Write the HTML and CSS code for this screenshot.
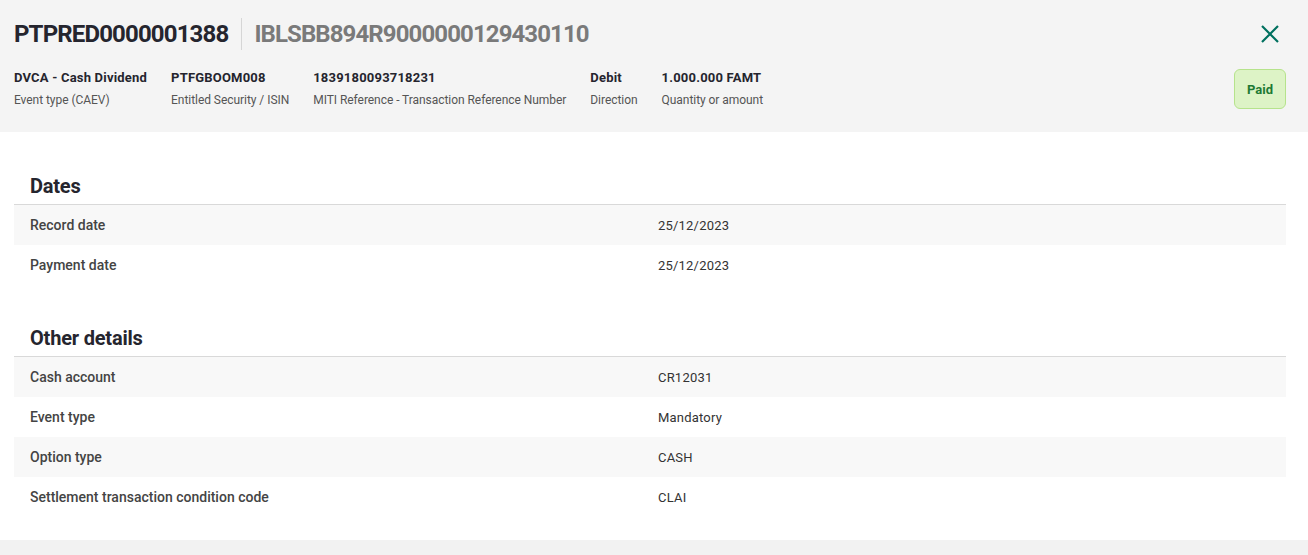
FILE: index.html
```html
<!DOCTYPE html>
<html lang="en">
<head>
    <meta charset="UTF-8">
    <meta name="viewport" content="width=device-width, initial-scale=1.0">
    <title>PTPRED0000001388</title>
    <link rel="stylesheet" href="styles.css">
</head>
<body>
    <div class="header">
        <div class="title-row">
            <h1 class="title">PTPRED0000001388</h1>
            <span class="title-sub">IBLSBB894R9000000129430110</span>
            <button class="close-button" aria-label="Close">
                <svg width="18" height="18" viewBox="0 0 18 18">
                    <path d="M1 1 L17 17 M17 1 L1 17" stroke="currentColor" stroke-width="2.2" fill="none"/>
                </svg>
            </button>
        </div>
        <div class="meta-row">
            <div class="meta-item">
                <div class="meta-value">DVCA - Cash Dividend</div>
                <div class="meta-label">Event type (CAEV)</div>
            </div>
            <div class="meta-item">
                <div class="meta-value">PTFGBOOM008</div>
                <div class="meta-label">Entitled Security / ISIN</div>
            </div>
            <div class="meta-item">
                <div class="meta-value">1839180093718231</div>
                <div class="meta-label">MITI Reference - Transaction Reference Number</div>
            </div>
            <div class="meta-item">
                <div class="meta-value">Debit</div>
                <div class="meta-label">Direction</div>
            </div>
            <div class="meta-item">
                <div class="meta-value">1.000.000 FAMT</div>
                <div class="meta-label">Quantity or amount</div>
            </div>
            <span class="status-badge">Paid</span>
        </div>
    </div>

    <div class="content">
        <div class="section">
            <h2 class="section-title">Dates</h2>
            <div class="detail-row">
                <span class="detail-label">Record date</span>
                <span class="detail-value">25/12/2023</span>
            </div>
            <div class="detail-row">
                <span class="detail-label">Payment date</span>
                <span class="detail-value">25/12/2023</span>
            </div>
        </div>

        <div class="section">
            <h2 class="section-title">Other details</h2>
            <div class="detail-row">
                <span class="detail-label">Cash account</span>
                <span class="detail-value">CR12031</span>
            </div>
            <div class="detail-row">
                <span class="detail-label">Event type</span>
                <span class="detail-value">Mandatory</span>
            </div>
            <div class="detail-row">
                <span class="detail-label">Option type</span>
                <span class="detail-value">CASH</span>
            </div>
            <div class="detail-row">
                <span class="detail-label">Settlement transaction condition code</span>
                <span class="detail-value">CLAI</span>
            </div>
        </div>
    </div>
</body>
</html>
```

FILE: styles.css
```css
body {
    margin: 0;
    font-family: Roboto, "Liberation Sans", Arial, sans-serif;
    background-color: #f2f2f2;
    color: #2a2a33;
}

.header {
    background-color: #f4f4f4;
    padding: 18px 22px 22px 14px;
}

.title-row {
    display: flex;
    align-items: center;
    height: 32px;
}

.title {
    margin: 0;
    font-size: 24px;
    font-weight: 700;
    line-height: 32px;
    letter-spacing: -0.85px;
    color: #25252e;
    padding-right: 13px;
    border-right: 1px solid #d6d6d6;
}

.title-sub {
    font-size: 24px;
    font-weight: 700;
    line-height: 32px;
    letter-spacing: -0.9px;
    color: #7a7a7a;
    padding-left: 12px;
}

.close-button {
    margin-left: auto;
    width: 32px;
    height: 32px;
    border: none;
    background: none;
    padding: 0;
    display: flex;
    align-items: center;
    justify-content: center;
    color: #00705f;
    cursor: pointer;
}

.meta-row {
    display: flex;
    align-items: center;
    gap: 24px;
    margin-top: 18px;
}

.meta-value {
    font-size: 13px;
    font-weight: 700;
    line-height: 20px;
    letter-spacing: 0.2px;
    color: #25252e;
}

.meta-label {
    font-size: 12px;
    line-height: 20px;
    margin-top: 2px;
    letter-spacing: -0.05px;
    color: #555;
}

.status-badge {
    margin-left: auto;
    width: 52px;
    height: 40px;
    box-sizing: border-box;
    display: flex;
    align-items: center;
    justify-content: center;
    background-color: #ddf3c6;
    border: 1px solid #b6e38c;
    border-radius: 6px;
    color: #1d7a34;
    font-size: 13px;
    font-weight: 700;
}

.content {
    background-color: #ffffff;
    padding: 1px 22px 23px 14px;
}

.section {
    margin-top: 41px;
}

.section-title {
    margin: 0;
    padding: 0 16px 6px;
    font-size: 20px;
    font-weight: 700;
    line-height: 24px;
    letter-spacing: -0.2px;
    color: #25252e;
    border-bottom: 1px solid #d9d9d9;
}

.detail-row {
    display: grid;
    grid-template-columns: 1fr 1fr;
    gap: 16px;
    padding: 0 16px;
    height: 40px;
    align-items: center;
    font-size: 13px;
}

.detail-row:nth-of-type(odd) {
    background-color: #f8f8f8;
}

.detail-label {
    font-size: 14px;
    font-weight: 500;
    color: #444;
}

.detail-value {
    color: #333;
    letter-spacing: 0.2px;
}
```
